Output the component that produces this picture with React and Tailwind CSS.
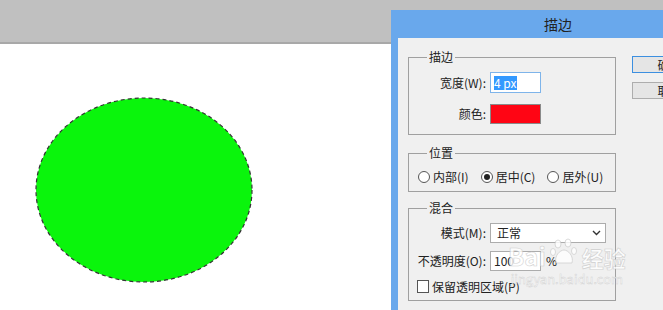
import React from "react";

const font = { fontFamily: '"Noto Sans CJK SC", "Noto Sans", sans-serif' };

function Group({ title, className, children }) {
    return (
        <div className={"relative w-[208px] border border-[#a0a0a0] " + className}>
            <span className="absolute left-[18px] top-[-10px] bg-[#f0f0f0] px-[2px] text-[12px] leading-[18px] text-[#222]">
                {title}
            </span>
            {children}
        </div>
    );
}

function Label({ children }) {
    return <span className="w-[79px] shrink-0 text-right text-[12px] leading-none text-[#222] pr-[2px]">{children}</span>;
}

function Radio({ checked, label }) {
    return (
        <div className="flex items-center gap-[3px]">
            <span className="flex h-[12px] w-[12px] items-center justify-center rounded-full border border-[#555] bg-white">
                {checked && <span className="h-[6px] w-[6px] rounded-full bg-[#222]" />}
            </span>
            <span className="text-[12px] leading-none text-[#222]">{label}</span>
        </div>
    );
}

export default function App() {
    return (
        <div className="relative h-[310px] w-[663px] overflow-hidden bg-white" style={font}>
            {/* toolbar strip */}
            <div className="h-[42px] bg-[#c0c0c0]" />
            <div className="h-[2px] bg-[#a8a8a8]" />
            {/* canvas */}
            <svg width="390" height="266" className="block">
                <ellipse cx="144" cy="146" rx="108" ry="92" fill="#0af50c" stroke="#333" strokeWidth="1.2" strokeDasharray="4 3" />
            </svg>

            {/* stroke dialog */}
            <div className="absolute left-[391px] top-[10px] h-[310px] w-[290px] bg-[#69a8ec] pl-[7px]">
                <div className="flex h-[28px] items-center pl-[146px] text-[14px] text-[#222]">
                    描边
                </div>
                <div className="flex h-full gap-[16px] bg-[#f0f0f0] pl-[10px] pt-[19px]">
                    <div className="flex flex-col">
                        <Group title="描边" className="h-[78px] pt-[14px]">
                            <div className="flex items-center">
                                <Label>宽度(W):</Label>
                                <span className="ml-[2px] flex h-[21px] w-[51px] items-center border border-[#7eb4ea] bg-white px-[3px]">
                                    <span className="bg-[#3399ff] text-[12px] leading-[14px] text-white">4 px</span>
                                </span>
                            </div>
                            <div className="mt-[11px] flex items-center">
                                <Label>颜色:</Label>
                                <span className="ml-[2px] h-[20px] w-[51px] border border-[#8a8a8a] bg-[#ff0514]" />
                            </div>
                        </Group>

                        <Group title="位置" className="mt-[18px] h-[39px] pl-[9px] pt-[17px]">
                            <div className="flex items-center gap-[12px]">
                                <Radio label="内部(I)" />
                                <Radio checked label="居中(C)" />
                                <Radio label="居外(U)" />
                            </div>
                        </Group>

                        <Group title="混合" className="mt-[16px] h-[93px] pt-[14px]">
                            <div className="flex items-center">
                                <Label>模式(M):</Label>
                                <span className="ml-[2px] flex h-[20px] w-[116px] items-center justify-between border border-[#acacac] bg-white pl-[6px] pr-[4px] text-[12px] text-[#222]">
                                    正常
                                    <svg width="9" height="6" viewBox="0 0 9 6">
                                        <path d="M1 1 L4.5 4.5 L8 1" fill="none" stroke="#333" strokeWidth="1.4" />
                                    </svg>
                                </span>
                            </div>
                            <div className="mt-[8px] flex items-center">
                                <Label>不透明度(O):</Label>
                                <span className="ml-[2px] flex h-[20px] w-[51px] items-center border border-[#acacac] bg-white px-[3px] text-[12px] text-[#222]">
                                    100
                                </span>
                                <span className="ml-[5px] text-[12px] text-[#222]">%</span>
                            </div>
                            <div className="mt-[9px] flex items-center gap-[3px] pl-[8px]">
                                <span className="h-[13px] w-[12px] border border-[#555] bg-white" />
                                <span className="text-[12px] leading-none text-[#222]">保留透明区域(P)</span>
                            </div>
                        </Group>
                    </div>

                    <div className="flex flex-col gap-[9px]">
                        <button className="-mt-px h-[17px] w-[75px] border border-[#3c8fe0] bg-[#e5e5e5] text-[12px] leading-none text-[#222]">
                            确定
                        </button>
                        <button className="h-[17px] w-[75px] border border-[#adadad] bg-[#e5e5e5] text-[12px] leading-none text-[#222]">
                            取消
                        </button>
                    </div>
                </div>
            </div>

            {/* watermark */}
            <div className="pointer-events-none absolute left-[508px] top-[238px] flex flex-col items-center opacity-80">
                <div className="flex items-end gap-[4px] text-[24px] font-bold leading-none text-white [-webkit-text-stroke:0.6px_#c8c8c8]">
                    <span>Bai</span>
                    <svg width="28" height="28" viewBox="0 0 28 28" className="mb-[2px]">
                        <g fill="#fff" stroke="#c8c8c8" strokeWidth="0.8">
                            <ellipse cx="8" cy="6" rx="3" ry="4" />
                            <ellipse cx="18" cy="5" rx="3" ry="4" />
                            <ellipse cx="3" cy="14" rx="2.5" ry="3.5" />
                            <ellipse cx="24" cy="13" rx="2.5" ry="3.5" />
                            <path d="M6 25 C4 18 10 12 14 12 C18 12 24 18 22 25 Z" />
                        </g>
                    </svg>
                    <span className="text-[22px]">经验</span>
                </div>
                <span className="mt-[4px] text-[13px] leading-none text-white [-webkit-text-stroke:0.4px_#c8c8c8]">
                    jingyan.baidu.com
                </span>
            </div>
        </div>
    );
}
